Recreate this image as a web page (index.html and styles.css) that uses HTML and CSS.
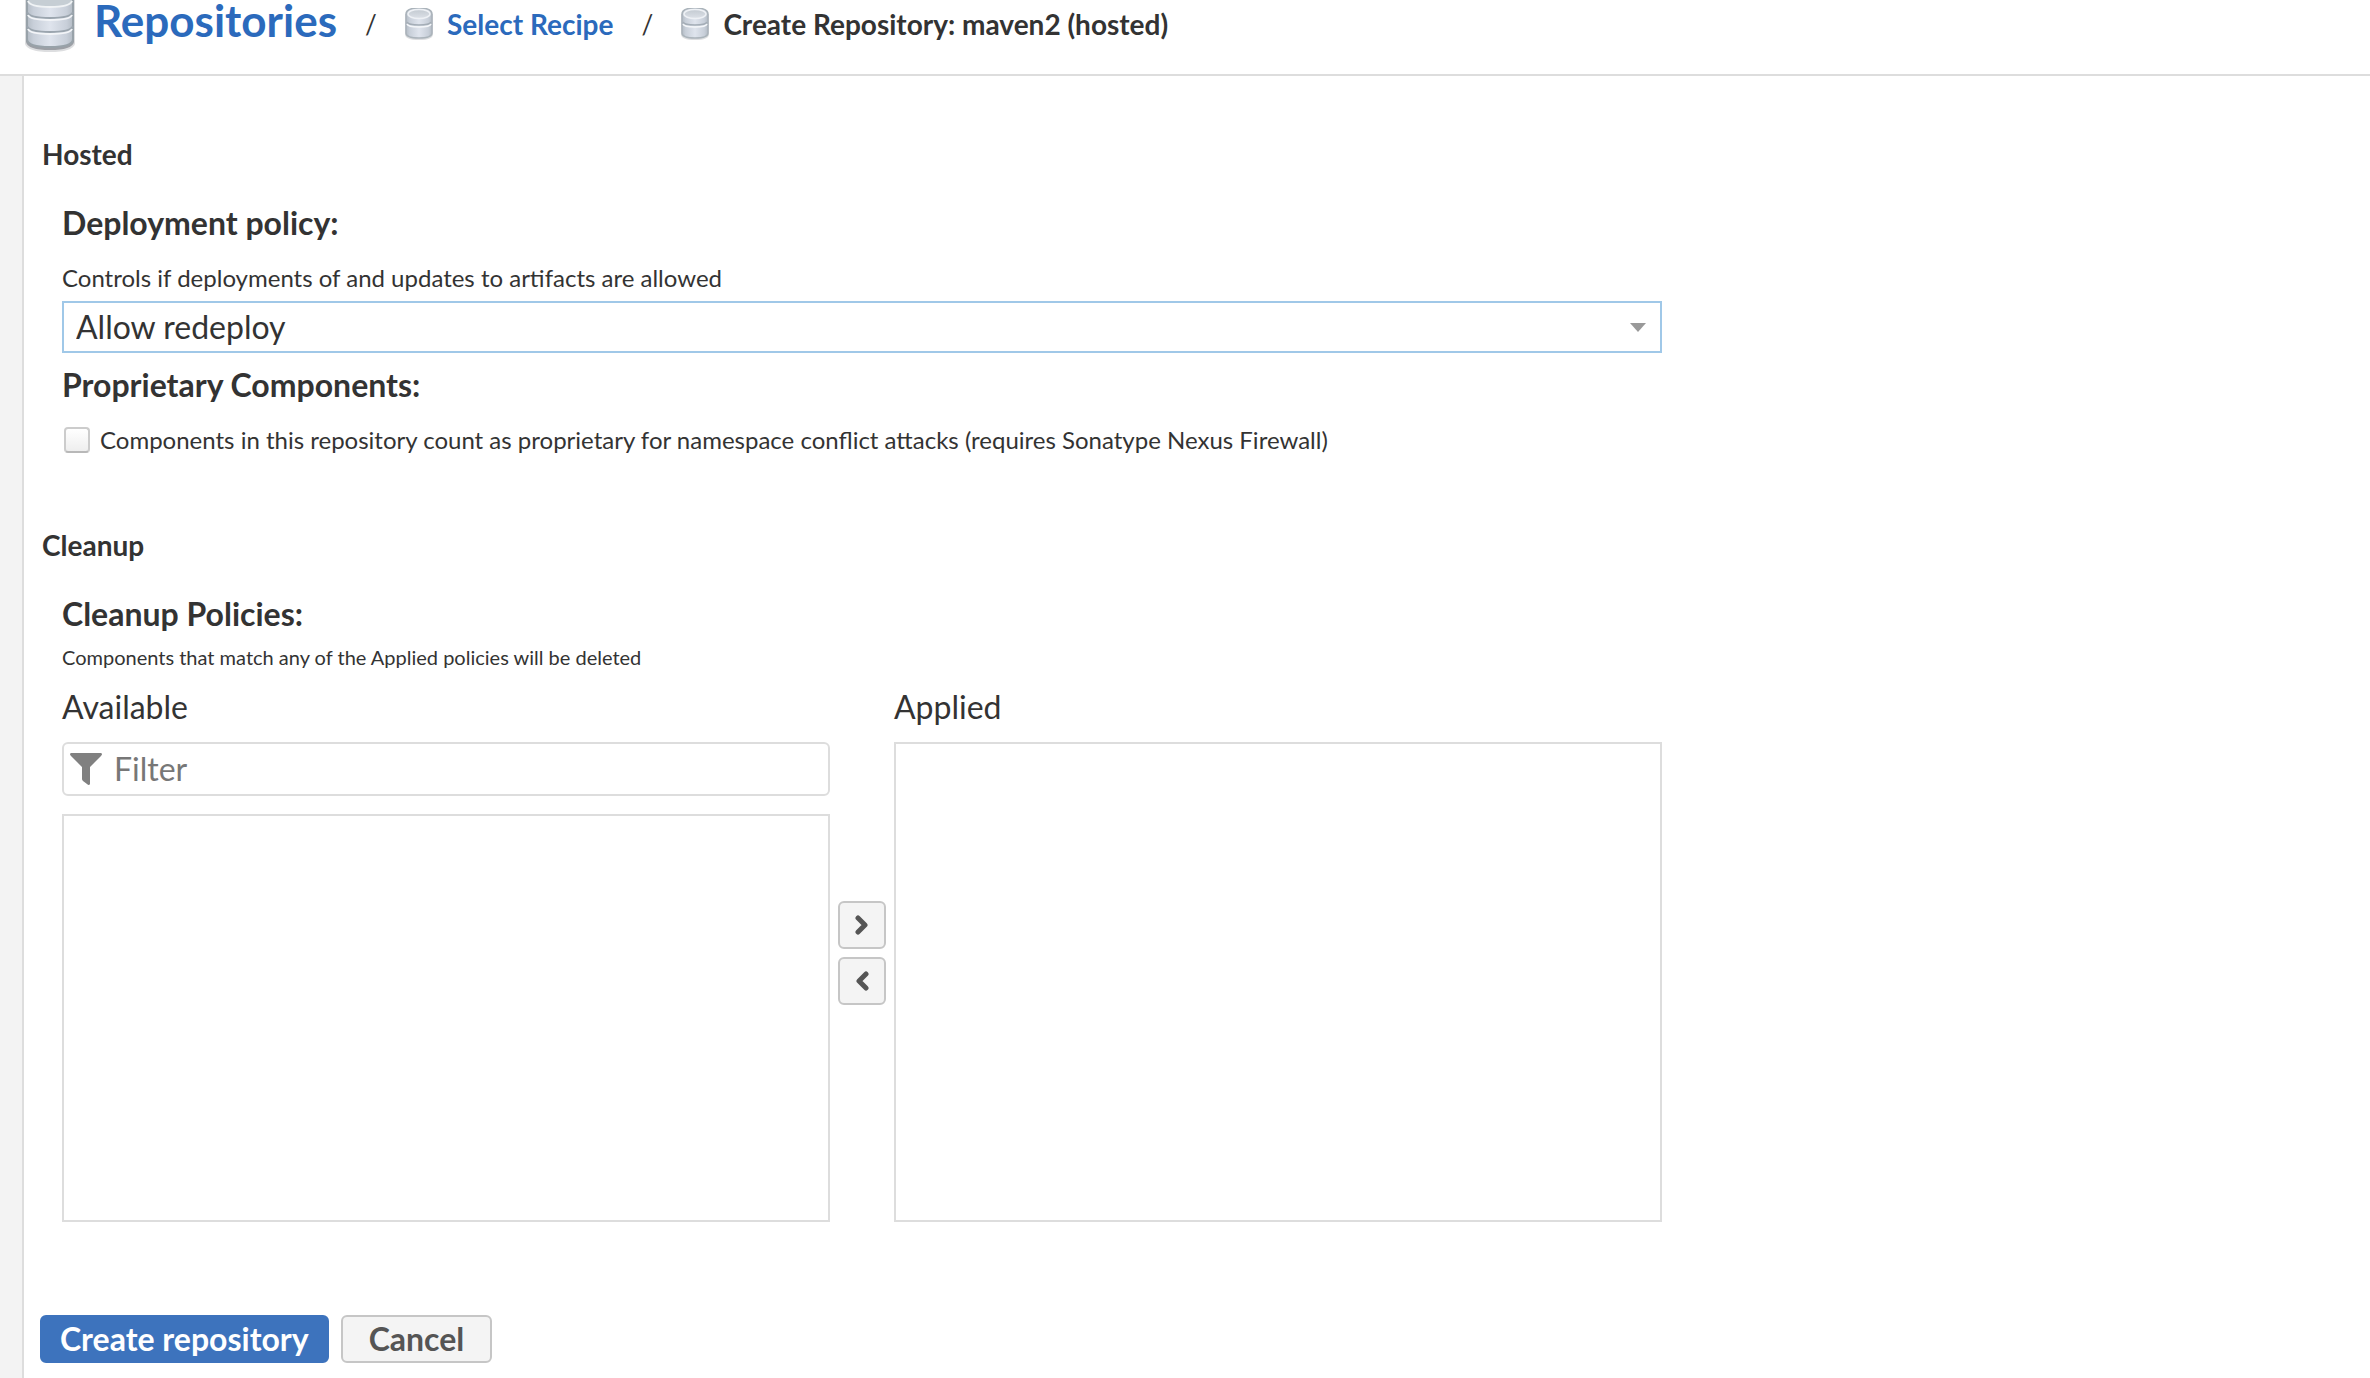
FILE: index.html
```html
<!DOCTYPE html>
<html lang="en">
<head>
<meta charset="utf-8">
<title>Create Repository: maven2 (hosted)</title>
<link rel="stylesheet" href="styles.css">
</head>
<body>
<svg class="defs" aria-hidden="true">
  <defs>
    <linearGradient id="side" x1="0" x2="1" y1="0" y2="0">
      <stop offset="0" stop-color="#b4bcc5"/>
      <stop offset=".14" stop-color="#c8cfd9"/>
      <stop offset=".5" stop-color="#dfe4ed"/>
      <stop offset=".86" stop-color="#c8cfd9"/>
      <stop offset="1" stop-color="#b4bcc5"/>
    </linearGradient>
    <linearGradient id="lid" x1="0" x2="0" y1="0" y2="1">
      <stop offset="0" stop-color="#c3cad1"/>
      <stop offset="1" stop-color="#dce1e7"/>
    </linearGradient>
    <symbol id="database" viewBox="0 0 28 32">
      <path d="M0 6v20q0 6 14 6t14-6V6z" fill="#8d9298" opacity=".3"/>
      <path d="M1 6Q1 0 14 0t13 6v19q0 5-13 5T1 25z" fill="url(#side)" stroke="#aab3ba" stroke-width="1.500"/>
      <ellipse cx="14" cy="6" rx="11" ry="4.500" fill="url(#lid)" stroke="#eef1f5" stroke-width="1.500"/>
      <path d="M2 14q1 3 12 3t12-3" fill="none" stroke="#a4adb6" stroke-width="1.500"/>
      <path d="M2 16q1 3 12 3t12-3" fill="none" stroke="#f4f6f9" stroke-width="1.500"/>
    </symbol>
  </defs>
</svg>

<header class="header">
  <svg class="header-icon" viewBox="0 0 52 54" aria-hidden="true">
    <path d="M1 0v44q3 8 25 8t25-8V0z" fill="#777c82" opacity=".25"/>
    <path d="M2 0v42q2 8 24 8t24-8V0z" fill="#80858b" opacity=".7"/>
    <path d="M3 -2v41q0 8 23 8t23-8V-2z" fill="url(#side)" stroke="#98a2a9" stroke-width="2"/>
    <path d="M4 0q2 6 22 6t22-6z" fill="#c6ced4"/>
    <path d="M4 1q2 6 22 6t22-6" fill="none" stroke="#f0f3f5" stroke-width="2"/>
    <path d="M3 12q2 6 23 6t23-6M3 26q2 6 23 6t23-6" fill="none" stroke="#9ba5ae" stroke-width="2"/>
    <path d="M4 15q2 5 22 5t22-5M4 29q2 5 22 5t22-5" fill="none" stroke="#f3f5f8" stroke-width="2"/>
  </svg>
  <nav class="crumbs" aria-label="Breadcrumb">
    <a class="crumb-root" href="#">Repositories</a>
    <span class="slash">/</span>
    <a class="crumb" href="#"><svg class="crumb-icon" aria-hidden="true"><use href="#database"/></svg>Select Recipe</a>
    <span class="slash">/</span>
    <span class="crumb crumb-current"><svg class="crumb-icon" aria-hidden="true"><use href="#database"/></svg>Create Repository: maven2 (hosted)</span>
  </nav>
</header>

<main class="page">
  <form class="form">
    <section>
      <h2 class="section-title">Hosted</h2>
      <div class="fields">
        <label class="label" for="policy">Deployment policy:</label>
        <p class="help">Controls if deployments of and updates to artifacts are allowed</p>
        <div class="select-box">
          <select class="select" id="policy"><option>Allow redeploy</option></select>
          <svg class="select-arrow" viewBox="0 0 16 9" aria-hidden="true"><path d="M0 0h16L8 9z" fill="#999"/></svg>
        </div>
        <h3 class="label label-next">Proprietary Components:</h3>
        <div class="check-row">
          <input class="check" type="checkbox" id="proprietary">
          <label for="proprietary">Components in this repository count as proprietary for namespace conflict attacks (requires Sonatype Nexus Firewall)</label>
        </div>
      </div>
    </section>

    <section class="section-next">
      <h2 class="section-title">Cleanup</h2>
      <div class="fields">
        <h3 class="label">Cleanup Policies:</h3>
        <p class="note">Components that match any of the Applied policies will be deleted</p>
        <div class="picker">
          <div class="column">
            <h4 class="column-title">Available</h4>
            <div class="filter">
              <svg class="filter-icon" viewBox="0 0 32 32" aria-hidden="true"><path d="M1 0h30q2 1 0 3L20 14v17q-1 2-3 0l-4-3q-1-1-1-2V14L1 3Q-1 1 1 0z" fill="#808080"/></svg>
              <input class="filter-input" type="text" placeholder="Filter" aria-label="Filter">
            </div>
            <div class="list"></div>
          </div>
          <div class="movers">
            <button class="button mover" type="button" aria-label="Add"><svg class="chevron" viewBox="0 0 14 20" aria-hidden="true"><path d="M3 3l7 7-7 7"/></svg></button>
            <button class="button mover" type="button" aria-label="Remove"><svg class="chevron" viewBox="0 0 14 20" aria-hidden="true"><path d="M11 3l-7 7 7 7"/></svg></button>
          </div>
          <div class="column">
            <h4 class="column-title">Applied</h4>
            <div class="list list-applied"></div>
          </div>
        </div>
      </div>
    </section>

    <div class="actions">
      <button class="button primary" type="button">Create repository</button>
      <button class="button" type="button">Cancel</button>
    </div>
  </form>
</main>
</body>
</html>
```
FILE: styles.css
```css
* {
  box-sizing: border-box;
}

body {
  margin: 0;
  min-height: 100vh;
  display: flex;
  flex-direction: column;
  font-family: Lato, "Open Sans", sans-serif;
  font-size: 32px;
  line-height: 36px;
  color: #333;
  background: #fff;
}

h2, h3, h4, p {
  margin: 0;
}

.defs {
  position: absolute;
  width: 0;
  height: 0;
}

.header {
  display: flex;
  gap: 18px;
  padding: 0 24px 20px;
  border-bottom: 2px solid #ddd;
}

.header-icon {
  width: 52px;
  height: 54px;
}

.crumbs {
  display: flex;
  align-items: flex-end;
  height: 40px;
  font-size: 28px;
  line-height: 32px;
}

.crumb-root {
  font-size: 44px;
  line-height: 40px;
  font-weight: 700;
  color: #2b6abc;
  text-decoration: none;
}

.slash {
  width: 68px;
  font-size: 26px;
  text-align: center;
}

.crumb {
  display: flex;
  gap: 14px;
  font-weight: 700;
  color: #2b6abc;
  text-decoration: none;
}

.crumb-current {
  color: #333;
}

.crumb-icon {
  width: 28px;
  height: 32px;
}

.page {
  flex: 1;
  margin-left: 22px;
  padding: 62px 16px 14px;
  border-left: 2px solid #ddd;
  box-shadow: -22px 0 0 #f3f3f3;
}

.form {
  max-width: 1622px;
}

.section-next {
  margin-top: 74px;
}

.section-title {
  padding-left: 2px;
  font-size: 28px;
  line-height: 32px;
  font-weight: 700;
}

.fields {
  padding: 35px 0 0 22px;
}

.label {
  display: block;
  font-size: 32px;
  line-height: 36px;
  font-weight: 700;
}

.label-next {
  margin-top: 14px;
}

.help,
.check-row {
  margin-top: 22px;
  font-size: 24px;
  line-height: 30px;
}

.select-box {
  display: grid;
  align-items: center;
  margin-top: 8px;
}

.select,
.select-arrow {
  grid-area: 1 / 1;
}

.select {
  appearance: none;
  width: 100%;
  height: 52px;
  padding: 0 12px;
  border: 2px solid #a0c8e8;
  border-radius: 0;
  background: #fff;
  font: inherit;
  color: inherit;
  outline: none;
}

.select-arrow {
  justify-self: end;
  width: 16px;
  height: 9px;
  margin-right: 16px;
  pointer-events: none;
}

.check-row {
  display: flex;
  align-items: center;
  gap: 10px;
}

.check {
  appearance: none;
  flex: none;
  width: 26px;
  height: 26px;
  margin: 0 0 0 2px;
  border: 2px solid #ccc;
  border-bottom-color: #b8b8b8;
  border-radius: 4px;
  background: linear-gradient(#fff, #eee);
}

.note {
  margin-top: 13px;
  font-size: 20px;
  line-height: 24px;
}

.picker {
  display: flex;
  margin-top: 20px;
}

.column {
  flex: 1;
  display: flex;
  flex-direction: column;
}

.column-title {
  margin-bottom: 17px;
  font-size: 32px;
  font-weight: 400;
}

.filter {
  display: flex;
  align-items: center;
  gap: 12px;
  height: 54px;
  margin-bottom: 18px;
  padding: 0 6px;
  border: 2px solid #ddd;
  border-radius: 6px;
}

.filter-icon {
  width: 32px;
  height: 32px;
}

.filter-input {
  flex: 1;
  min-width: 0;
  padding: 0;
  border: 0;
  background: none;
  font: inherit;
  color: #333;
  outline: none;
}

.filter-input::placeholder {
  color: #777;
}

.list {
  height: 408px;
  border: 2px solid #ddd;
}

.list-applied {
  height: 480px;
}

.movers {
  display: flex;
  flex-direction: column;
  gap: 8px;
  padding: 212px 8px 0;
}

.button {
  height: 48px;
  padding: 0 26px;
  border: 2px solid #c6c6c6;
  border-radius: 6px;
  background: #f4f4f4;
  font: inherit;
  font-weight: 700;
  line-height: 36px;
  color: #555;
}

.mover {
  display: grid;
  place-items: center;
  width: 48px;
  padding: 0;
}

.chevron {
  width: 14px;
  height: 20px;
  fill: none;
  stroke: #555;
  stroke-width: 5;
  stroke-linecap: round;
  stroke-linejoin: round;
}

.primary {
  padding: 0 18px;
  border-color: #3d73bd;
  background: #3d73bd;
  color: #fff;
}

.actions {
  display: flex;
  gap: 12px;
  margin-top: 93px;
}
```
